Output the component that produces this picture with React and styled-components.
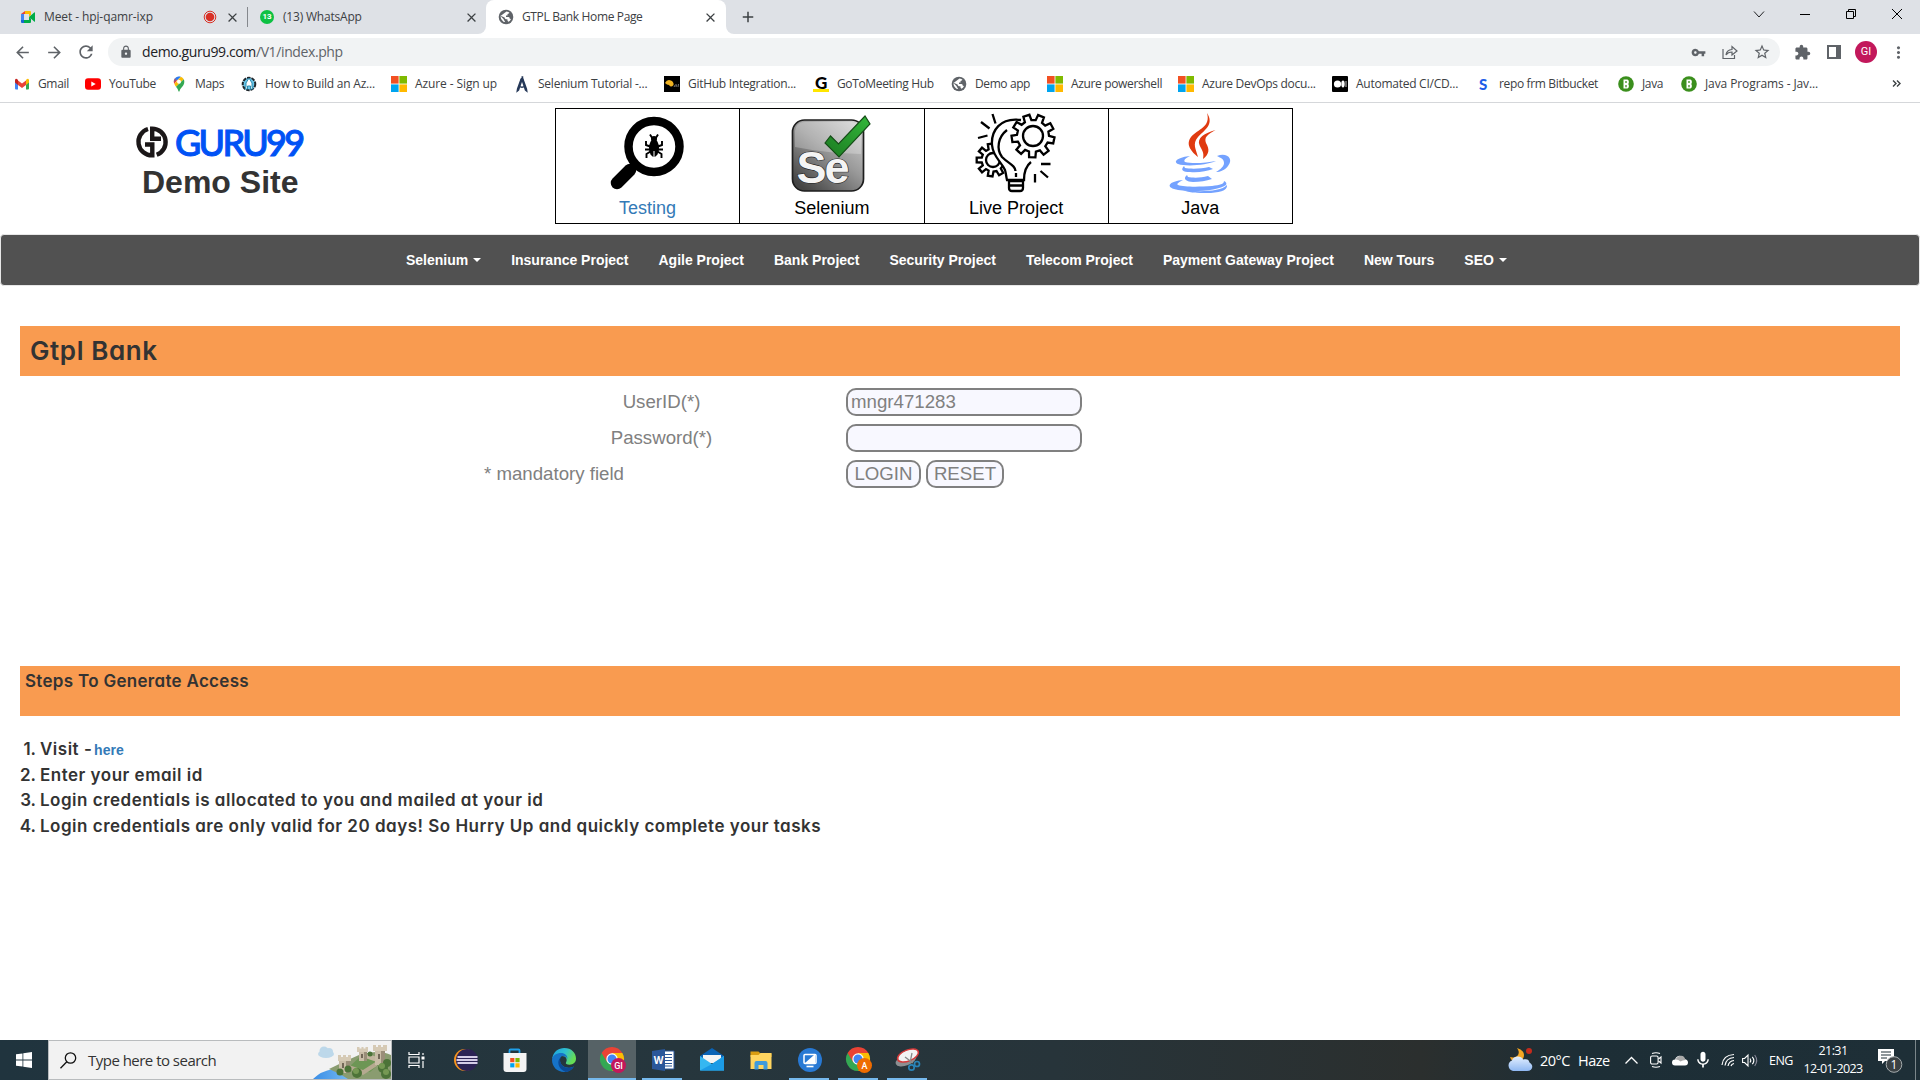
import React from "react";
import styled, { createGlobalStyle } from "styled-components";
import {
  MdArrowBack, MdArrowForward, MdRefresh, MdLock, MdVpnKey,
  MdStarOutline, MdExtension, MdMoreVert, MdClose, MdAdd, MdMic,
} from "react-icons/md";

const ui = `"Open Sans", "Noto Sans", sans-serif`;
const arial = `"Liberation Sans", Arial, sans-serif`;
const rounded = `Inter, Lato, sans-serif`;

const Global = createGlobalStyle`
  *, *::before { box-sizing: border-box; }
  body { margin: 0; background: #fff; overflow: hidden; font-family: ${arial}; }
  svg { display: block; flex: none; overflow: visible; }
`;

const Screen = styled.div`
  width: 1920px;
  height: 1080px;
  display: flex;
  flex-direction: column;
  overflow: hidden;
`;

/* ---------- browser ---------- */
const TabStrip = styled.header`
  height: 34px;
  display: flex;
  flex: none;
  font: 12px ${ui};
  color: #3c4043;
`;
const StripLeft = styled.div`
  width: 486px;
  display: flex;
  background: #dee1e6;
  border-bottom-right-radius: 8px;
`;
const StripRight = styled.div`
  flex: 1;
  display: flex;
  align-items: center;
  background: #dee1e6;
  border-bottom-left-radius: 8px;
  padding-left: 13px;
`;
const TabCorner = styled.div`
  background: #dee1e6;
  height: 17px;
  width: 240px;
`;
const Tab = styled.div`
  width: ${(p) => p.$w}px;
  height: 34px;
  display: flex;
  align-items: center;
  gap: 8px;
  padding: 0 ${(p) => p.$pr}px 0 ${(p) => p.$pl}px;
  background: ${(p) => (p.$active ? "#fff" : "transparent")};
  border-radius: 8px 8px 0 0;
`;
const TabTitle = styled.span`
  flex: 1;
  padding-bottom: 1px;
  letter-spacing: ${(p) => p.$ls}px;
  white-space: nowrap;
`;
const Divider = styled.i`
  width: 1px;
  height: 20px;
  margin-top: 7px;
  background: #85888d;
`;
const WindowButtons = styled.div`
  display: flex;
  margin-left: auto;
  padding-bottom: 6px;
  align-items: center;
`;
const Slot = styled.span`
  width: ${(p) => p.$w}px;
  display: flex;
  flex: none;
  align-items: center;
  justify-content: center;
  color: ${(p) => p.$c || "#5f6368"};
`;
const AddressRow = styled.div`
  height: 36px;
  flex: none;
  display: flex;
  align-items: center;
  padding-left: 6px;
`;
const Omnibox = styled.div`
  width: 1672px;
  height: 28px;
  margin-left: 6px;
  border-radius: 14px;
  background: #f1f3f4;
  display: flex;
  align-items: center;
  padding: 0 2px 0 11px;
`;
const Url = styled.span`
  flex: 1;
  margin-left: 9px;
  padding-bottom: 1px;
  font: 14px ${ui};
  letter-spacing: -0.39px;
  color: #5f6368;
  b { font-weight: 400; color: #202124; }
`;
const Avatar = styled.span`
  width: 22px;
  height: 22px;
  border-radius: 50%;
  background: #c2185b;
  color: #fff;
  font: 11px/22px Roboto, sans-serif;
  text-align: center;
`;
const Bookmarks = styled.nav`
  height: 33px;
  flex: none;
  display: flex;
  align-items: center;
  padding: 0 0 5px 14px;
  border-bottom: 1px solid #d5d7da;
  font: 12px ${ui};
  color: #3c4043;
`;
const Bookmark = styled.a`
  width: ${(p) => p.$w}px;
  display: flex;
  align-items: center;
  gap: 8px;
  letter-spacing: ${(p) => p.$ls || -0.35}px;
  white-space: nowrap;
`;

const s16 = { width: 16, height: 16, viewBox: "0 0 16 16" };
const Meet = () => (
  <svg {...s16}>
    <path d="M1 5l4-3v3H1z" fill="#ea4335" /><path d="M1 5h3v6H1z" fill="#4285f4" />
    <path d="M1 11h3v3H2a1 1 0 0 1-1-1z" fill="#1967d2" />
    <path d="M5 2h5q1 0 1 1v3L9 8V5H5z" fill="#fbbc04" />
    <path d="M4 11h5V8l2 2v3q0 1-1 1H4zM9 8l5.2-4.6q.8-.5.8.4v8.4q0 .9-.8.4z" fill="#00ac47" />
  </svg>
);
const Record = () => (
  <svg width="14" height="14" viewBox="0 0 14 14"><circle cx="7" cy="7" r="5.8" fill="none" stroke="#d93025" /><circle cx="7" cy="7" r="4.300" fill="#d93025" /></svg>
);
const WaBadge = styled.span`
  width: 14px;
  height: 14px;
  margin: 0 1px;
  border-radius: 50%;
  background: #0dc143;
  color: #fff;
  font: bold 8px/14px Roboto, sans-serif;
  text-align: center;
`;
const Gmail = () => (
  <svg {...s16}>
    <path d="M1 4h3v9.5H2q-1 0-1-1z" fill="#4285f4" /><path d="M12 4h3v8.500q0 1-1 1h-2z" fill="#34a853" />
    <path d="M4 4.500l4 3 4-3V9L8 12 4 9z" fill="#ea4335" /><path d="M1 4.500Q1 2 3 3l1 1v5L1 6.500z" fill="#c5221f" />
    <path d="M15 4.500Q15 2 13 3l-1 1v5l3-2.500z" fill="#fbbc04" />
  </svg>
);
const YouTube = () => (
  <svg {...s16}><rect y="2.300" width="16" height="11.400" rx="3" fill="#f00" /><path d="M6.300 5.500v5L10.700 8z" fill="#fff" /></svg>
);
const Maps = () => (
  <svg {...s16}>
    <path d="M8 0.500a5.300 5.300 0 0 0-4 1.800L6 4.500 9.800.800z" fill="#4285f4" />
    <path d="M4 2.300A5.300 5.300 0 0 0 3.400 8L6 4.500z" fill="#ea4335" />
    <path d="M9.800.800 3.400 8q.600 1.500 1.600 2.700L12.800 3.300Q11.700 1.300 9.800.800z" fill="#fbbc04" />
    <path d="M12.800 3.300 5 10.700q2 2.300 2.400 4.300.6 1.300 1.200 0c.7-3.500 4.800-5 4.700-9.300q0-1.300-.5-2.400z" fill="#34a853" />
    <path d="M8 0.500A5.300 5.300 0 0 0 2.800 6L9.800.800z" fill="#1a73e8" opacity=".55" />
    <circle cx="8" cy="5.700" r="2" fill="#fff" />
  </svg>
);
const Rocket = () => (
  <svg {...s16}>
    <circle cx="8" cy="8" r="6.300" fill="#6cc7ea" stroke="#20262b" strokeWidth="2" strokeDasharray="3.500 1" />
    <path d="M8 2l3 5v4l1 2H9.500V10h-3v3H4l1-2V7z" fill="#fff" stroke="#1d83a8" strokeWidth=".9" />
  </svg>
);
const Windows4 = () => (
  <svg {...s16}><path fill="#f25022" d="M0 0h7.600v7.600H0z" /><path fill="#7fba00" d="M8.400 0H16v7.600H8.400z" /><path fill="#00a4ef" d="M0 8.400h7.600V16H0z" /><path fill="#ffb900" d="M8.400 8.400H16V16H8.400z" /></svg>
);
const Compass = () => (
  <svg {...s16}><path d="M7.500 1h1v2M8 3.500 4.500 14l-1.200 1 .3-2L7 3.500M9 3.500 12.400 13l.3 2-1.200-1L8 3.500M5 10q3 2.500 6 0" fill="none" stroke="#253858" strokeWidth="1.500" /><circle cx="8" cy="3.500" r="1.700" fill="#253858" /></svg>
);
const Bird = () => (
  <svg {...s16}><path d="M0 0h16v16H0z" fill="#000" /><path d="M1 7q2-4 6-2.500Q10 6 9.500 9 7 12 5 9 3 9 1 7z" fill="#f0b323" /><path d="M10 11l1.500-2.500M12 11l.5-2.500M14 11l.5-3" stroke="#999" strokeWidth=".8" /></svg>
);
const GoTo = styled.span`
  width: 16px;
  height: 16px;
  border-bottom: 3px solid #ffe600;
  color: #000;
  font: 900 17px/13px Lato, sans-serif;
  text-align: center;
`;
const Medium = () => (
  <svg {...s16}><rect width="16" height="16" rx="1" fill="#000" /><circle cx="5.500" cy="8" r="3.600" fill="#fff" /><ellipse cx="11" cy="8" rx="1.700" ry="3.400" fill="#fff" /><path d="M14 5v6" stroke="#fff" strokeWidth=".8" /></svg>
);
const SLetter = styled.span`
  width: 16px;
  color: #1f5fe8;
  font: 900 15px/16px Lato, sans-serif;
  text-align: center;
`;
const Green = () => (
  <svg {...s16}><circle cx="8" cy="8" r="7.800" fill="#3b8f1d" /><path d="M5.500 3.500v9h4l1.300-1.300V8.700L10 8l.8-.8V4.700L9.500 3.500z" fill="#fff" /><path d="M8 5v2M8 9v2.300" stroke="#3b8f1d" strokeWidth="1.300" /></svg>
);
const Globe = () => (
  <svg {...s16}>
    <circle cx="8" cy="8" r="7.300" fill="#5f6368" />
    <path d="M8.500 2.600q2.200.2 3 1.200-.5 1.100-2 1.100v1.500H8v1.500h2.500q1.300.3 1.300 1.800l1.200.4q-.9 1.900-2.500 2.700-1.300-.8-1.100-2.600H7.800Q6.600 9.800 6.600 8.500L2.500 6.800q-.2 3.600 2.700 5.600.8.600 1.600.7v-1.200Q5.700 11.600 5.700 10.200L2.500 7z" fill="#fff" />
  </svg>
);

const bookmarks = [
  [71, <Gmail />, "Gmail"], [86, <YouTube />, "YouTube"], [70, <Maps />, "Maps"],
  [150, <Rocket />, "How to Build an Az...", -0.22], [123, <Windows4 />, "Azure - Sign up", -0.1],
  [150, <Compass />, "Selenium Tutorial -...", -0.24], [149, <Bird />, "GitHub Integration...", -0.28],
  [138, <GoTo>G</GoTo>, "GoToMeeting Hub"], [96, <Globe />, "Demo app", -0.4],
  [131, <Windows4 />, "Azure powershell"], [154, <Windows4 />, "Azure DevOps docu...", -0.29],
  [143, <Medium />, "Automated CI/CD...", -0.26], [143, <SLetter>S</SLetter>, "repo frm Bitbucket"],
  [63, <Green />, "Java"], [211, <Green />, "Java Programs - Jav...", -0.1],
];

/* ---------- page ---------- */
const Page = styled.main`
  flex: 1;
  min-height: 0;
`;
const Top = styled.section`
  display: flex;
  height: 131px;
`;
const Brand = styled.div`
  width: 555px;
  padding: 22px 0 0 136px;
`;
const LogoRow = styled.div`
  display: flex;
  align-items: center;
  height: 34px;
`;
const Wordmark = styled.span`
  margin-left: 7px;
  font: 500 36px/34px Lato, sans-serif;
  -webkit-text-stroke: 1px #0052f5;
  letter-spacing: -2.7px;
  color: #0052f5;
`;
const DemoSite = styled.h2`
  margin: 4px 0 0 6px;
  font: bold 32px/38px ${arial};
  color: #333;
`;
const Cards = styled.div`
  display: flex;
  width: 738px;
  height: 116px;
  margin-top: 5px;
  border: 1px solid #000;
`;
const Card = styled.a`
  flex: 1;
  display: flex;
  flex-direction: column;
  align-items: center;
  padding-top: 4px;
  font: 18px/25px ${arial};
  color: ${(p) => (p.$link ? "#337ab7" : "#000")};
  & + & { border-left: 1px solid #000; }
  svg { margin: 0 ${(p) => p.$shift || 0}px 3px 0; }
`;
const NavBar = styled.nav`
  height: 52px;
  padding-left: 390px;
  display: flex;
  align-items: center;
  background: #515151;
  border: 1px solid #e7e7e7;
  border-radius: 4px;
`;
const NavItem = styled.a`
  display: flex;
  align-items: center;
  padding: 0 15px;
  font: bold 14px/20px ${arial};
  letter-spacing: -0.01px;
  color: #fff;
  white-space: nowrap;
`;
const Caret = styled.i`
  margin-left: 5px;
  border: 4px solid transparent;
  border-top-color: #fff;
  border-bottom: 0;
`;
const Band = styled.div`
  height: 50px;
  margin: ${(p) => p.$mt}px 20px 0;
  padding: ${(p) => p.$pad};
  background: #f99b50;
  color: #333;
  font: 600 ${(p) => p.$size}px/${(p) => p.$lh}px ${rounded};
  letter-spacing: ${(p) => p.$ls}px;
  font-feature-settings: "cv11";
`;
const Form = styled.form`
  width: 610px;
  margin: 12px 0 0 484px;
  display: grid;
  grid-template-columns: 355px 1fr;
  grid-auto-rows: 28px;
  column-gap: 7px;
  row-gap: 8px;
  font: 18.67px/28px ${arial};
  color: #808080;
`;
const Label = styled.label`
  text-align: ${(p) => (p.$left ? "left" : "center")};
`;
const Field = styled.input`
  width: 236px;
  height: 28px;
  padding: 0 3px;
  border: 2px solid #808080;
  border-radius: 10px;
  background: #f8f8ff;
  color: #808080;
  font: 18.67px ${arial};
`;
const Buttons = styled.div`
  display: flex;
  gap: 5px;
`;
const Button = styled.button`
  width: ${(p) => p.$w}px;
  height: 28px;
  padding: 0;
  border: 2px solid #808080;
  border-radius: 10px;
  background: #f8f8ff;
  color: #808080;
  font: 18.67px ${arial};
`;
const Steps = styled.ol`
  margin: 21px 0 0;
  padding: 0 0 0 40px;
  font: 600 17px/25.6px ${rounded};
  font-feature-settings: "cv11";
  letter-spacing: 0.5px;
  color: #333;
  a { margin-left: -3px; font: bold 14px/20px ${arial}; letter-spacing: 0; color: #337ab7; }
`;
const Step = styled.li`
  display: flex;
  align-items: baseline;
  height: 25.6px;
  white-space: pre;
  &::before {
    content: "${(p) => p.$n}.";
    width: 24px;
    margin-left: -24px;
    padding-right: 4px;
    letter-spacing: 0;
    display: flex;
    justify-content: flex-end;
  }
`;

const GuruMark = () => (
  <svg width="32" height="32" viewBox="0 0 32 32">
    <g fill="none" stroke="#1b1718" strokeWidth="4.400">
      <path d="M12 3A13.500 13.500 0 0 0 16.300 29.400V18.500H9" />
      <path d="M20.700 28.800A13.500 13.500 0 0 0 16.200 2.600V12.800H25" />
    </g>
  </svg>
);
const Magnifier = () => (
  <svg width="80" height="80" viewBox="0 0 80 80">
    <circle cx="48" cy="33.500" r="25.500" fill="none" stroke="#000" strokeWidth="8.500" />
    <path d="M29 52l-4 4" stroke="#000" strokeWidth="7" />
    <path d="M24 57L11 70" stroke="#000" strokeWidth="12.500" strokeLinecap="round" />
    <ellipse cx="48" cy="35" rx="5" ry="9" /><circle cx="48" cy="26" r="3" />
    <path d="M44 21.500l2.500 4M52 21.500l-2.500 4M40 28v4l4 1.500M56 28v4l-4 1.500M39 36.500h6M57 36.500h-6M40.500 45v-4l4-2.500M55.500 45v-4l-4-2.500" stroke="#000" strokeWidth="1.900" fill="none" />
    <path d="M48 38v6" stroke="#fff" strokeWidth="1" />
  </svg>
);
const SeleniumLogo = () => (
  <svg width="80" height="80" viewBox="0 0 80 80">
    <defs>
      <linearGradient id="se" x1="1" y1="0" x2="0.200" y2="1"><stop offset="0" stopColor="#d8d8d8" /><stop offset=".5" stopColor="#999" /><stop offset="1" stopColor="#444" /></linearGradient>
      <linearGradient id="ck" x1="0" y1="1" x2="1" y2="0"><stop offset="0" stopColor="#1c7a22" /><stop offset="1" stopColor="#33b83a" /></linearGradient>
    </defs>
    <rect x="1.500" y="7" width="71" height="71" rx="12" fill="url(#se)" stroke="#1e1e1e" strokeWidth="1.700" />
    <path d="M4 34V18Q5 9 14 9h47q9 1 9 10v22Q34 40 4 34z" fill="#fff" opacity=".25" />
    <text x="5.500" y="70" fontFamily="Liberation Sans" fontWeight="bold" fontSize="45" letterSpacing="-2" fill="#f4f4f4" stroke="#222" strokeWidth="1.200" paintOrder="stroke">Se</text>
    <path d="M34 30l5.500-7 8 8L74 3l5 8-31 33z" fill="url(#ck)" stroke="#164d18" strokeWidth="1.200" />
  </svg>
);
const gear = (cx, cy, ro, ri, n, rot = 0) => {
  const pts = [];
  for (let i = 0; i < n; i++) {
    const a = ((i + rot) * 2 * Math.PI) / n;
    const w = Math.PI / n;
    [[ri, -0.62], [ro, -0.42], [ro, 0.42], [ri, 0.62]].forEach(([r, k]) =>
      pts.push(`${(cx + r * Math.cos(a + k * w)).toFixed(1)},${(cy + r * Math.sin(a + k * w)).toFixed(1)}`)
    );
  }
  return pts.join(" ");
};
const Idea = () => (
  <svg width="80" height="80" viewBox="0 0 80 80" fill="none" stroke="#000" strokeWidth="2.300">
    <polygon points={gear(17, 47, 16.500, 11.500, 9, 0.500)} />
    <circle cx="17" cy="47" r="7" />
    <path d="M45 7C24 4 15 18 16 32c1 12 9 16 13 25 1 3 1 6 2 10h17c0-9 2-14 7-18" fill="#fff" />
    <path d="M31 17c-9 7-11 19-5 27 7 7 13 8 13.500 14M40 60v4" />
    <polygon points={gear(57, 23, 21.500, 16, 9, 0.300)} fill="#fff" />
    <circle cx="57" cy="23" r="10" />
    <path d="M33 68h14v7q0 3-3 3h-8q-3 0-3-3zM33 72.500h14M16.500 1l3 9.500M5 9l8.500 6.500M2 25l9.500-2.500M65 51h9.500M64.500 58l7.500 6.500M59 61v8.500" />
  </svg>
);
const JavaLogo = () => (
  <svg width="80" height="80" viewBox="0 0 80 80">
    <path d="M46 0c4 14-9 16-16 24-6 8 1 15 7 20-2-8-6-13 0-20 8-8 16-13 9-24z" fill="#e03a10" />
    <path d="M54.500 17c-11 3-19 8-16 15 2 5 5 7 3.500 14 6-5 7-9 3-16-2-6 1-8 9.500-13z" fill="#e03a10" />
    <g fill="#74a2ff">
      <path d="M29 43c-10 1-18 5-12 8 9 3 29 1 38-3-10 2-24 3-31 1-2-2 1-4 5-6z" />
      <path d="M56 43c10-4 17 3 11 10-3 4-8 6-12 6 5-3 8-6 8-9 0-4-3-5-7-7z" />
      <path d="M23 53c-4 4-1 6 6 6 8 1 17-1 23-3l-4-2c-8 2-19 2-24 1z" />
      <path d="M26 62c-5 4 0 7 6 7 7 0 13-1 19-3l-4-3c-7 2-15 2-20 1z" />
      <path d="M22 67c-12 1-18 6-9 9 14 4 45 2 52-4 1-2 0-3-2-4 0 3-4 4-12 5-14 1-28 1-34-1-2-1 1-3 5-5z" />
      <path d="M22 77c14 2 38 2 44-5 1 6-9 8-20 8-9 0-18 0-24-3z" />
    </g>
  </svg>
);

/* ---------- taskbar ---------- */
const Taskbar = styled.footer`
  height: 40px;
  flex: none;
  display: flex;
  align-items: center;
  background: linear-gradient(90deg, #20343e 0, #26363d 35%, #27343a 55%, #2b2f2e 74%, #1d2e36 82%, #1e2f37 100%);
  color: #fff;
  font: 14.500px ${ui};
`;
const SearchBox = styled.div`
  width: 344px;
  height: 40px;
  display: flex;
  align-items: center;
  padding-left: 11px;
  background: #f2f2f2;
  border: 1px solid #b9bcbe;
  color: #333;
  font-size: 15px;
  letter-spacing: -0.52px;
  span { flex: 1; margin-left: 11px; }
`;
const Apps = styled.div`
  display: flex;
  margin-left: -1px;
`;
const TaskItem = styled.span`
  width: ${(p) => p.$w || 49.2}px;
  height: 40px;
  display: flex;
  align-items: center;
  justify-content: center;
`;
const TaskFace = styled.span`
  width: ${(p) => (p.$active ? 48 : 40)}px;
  height: 40px;
  display: flex;
  align-items: center;
  justify-content: center;
  background: ${(p) => (p.$active ? "#566266" : "transparent")};
  border-bottom: 2px solid ${(p) => (p.$open ? "#76b9ed" : "transparent")};
  padding: 2px 0 0 2px;
`;
const Tray = styled.div`
  display: flex;
  align-items: center;
  height: 40px;
  margin-left: auto;
`;
const TrayText = styled.span`
  width: ${(p) => p.$w}px;
  font-size: ${(p) => p.$s || 14.5}px;
  letter-spacing: ${(p) => p.$ls || -0.5}px;
  white-space: nowrap;
`;
const Clock = styled.div`
  width: 72px;
  font-size: 12.500px;
  line-height: 18px;
  letter-spacing: -0.600px;
  text-align: center;
`;
const ShowDesktop = styled.i`
  width: 5px;
  height: 40px;
  border-left: 1px solid #7b868a;
`;

const Castle = () => (
  <svg width="80" height="38" viewBox="0 0 80 38">
    <defs><linearGradient id="river" x1="0" x2="1"><stop offset="0" stopColor="#3a8ee6" /><stop offset="1" stopColor="#7fc0f5" /></linearGradient></defs>
    <g fill="#bdd8ea"><ellipse cx="15" cy="13" rx="8" ry="4" /><circle cx="13" cy="10" r="4.500" /><circle cx="18" cy="11" r="4" /></g>
    <path d="M2 38Q10 30 22 28l22 10z" fill="url(#river)" />
    <path d="M18 28q16-8 30-14 20-6 32 0v24H37q-9-6-19-10z" fill="#8a9c70" />
    <path d="M38 26l14-13 20 7-13 11z" fill="#6d9655" />
    <path d="M38 24l14 5 14-9v5l-14 9-14-6z" fill="#b5a990" /><path d="M54 12l12 4v5l-12-4z" fill="#c3b69f" />
    <path d="M28 17h11v15H28zM48 8h8v12h-8zM64 7h10v17H64z" fill="#c9bda7" />
    <path d="M35 17h4v15h-4zM53 8h3v12h-3zM70 7h4v17h-4z" fill="#9a8e79" />
    <path d="M27 14h3v2h2v-2h3v2h2v-2h3v6H27zM46 6h2.500v1.500h2V6h2v1.500h2V6H57v5H46zM62 4h3v2h2V4h3v2h2V4h4v6H62z" fill="#d6cab5" />
    <path d="M32 22v5M51 13v4M68 13v5" stroke="#554b3e" strokeWidth="1.500" />
    <g fill="#4c7338"><circle cx="29" cy="31" r="3.500" /><circle cx="37" cy="28" r="3.500" /><circle cx="46" cy="32" r="5" /><circle cx="72" cy="27" r="5" /><circle cx="76" cy="22" r="4" /><circle cx="59" cy="13" r="2.500" /><circle cx="75" cy="33" r="5" /></g>
    <g fill="#759853"><circle cx="45" cy="30" r="3" /><circle cx="71" cy="25" r="3" /><circle cx="75" cy="31" r="3" /></g>
  </svg>
);
const s24 = { width: 24, height: 24, viewBox: "0 0 24 24" };
const TaskView = () => (
  <svg width="18" height="18" viewBox="0 0 18 18" fill="none" stroke="#fff" strokeWidth="1.200"><path d="M1 1v2.500h10V1M1 17v-2.500h10V17M1 6h10v6H1zM15 2v2M15 10v7" /><path d="M13.500 5.500h3v3h-3z" fill="#fff" stroke="none" /></svg>
);
const Eclipse = () => (
  <svg {...s24}><circle cx="11" cy="12" r="11" fill="#f7941e" /><circle cx="13" cy="12" r="11" fill="#2c2255" /><path d="M3.500 9h20M2.500 12h21M3.500 15h20" stroke="#d5cce8" strokeWidth="1.900" /></svg>
);
const Store = () => (
  <svg {...s24}><path d="M6.500 6V2.500q0-1 1-1h8q1 0 1 1V6" fill="none" stroke="#1fa0ea" strokeWidth="1.800" /><path d="M.5 5h23v16q0 3-3 3h-17q-3 0-3-3z" fill="#f4f4f4" /><path fill="#f25022" d="M7.200 10h4.200v4.200H7.200z" /><path fill="#7fba00" d="M12.400 10h4.200v4.200h-4.200z" /><path fill="#00a4ef" d="M7.200 15.200h4.200v4.200H7.200z" /><path fill="#ffb900" d="M12.400 15.200h4.200v4.200h-4.200z" /></svg>
);
const Edge = () => (
  <svg {...s24}>
    <defs><linearGradient id="eg" x1="0" x2="1" y2=".4"><stop offset="0" stopColor="#1ba0e2" /><stop offset=".55" stopColor="#2fc0d0" /><stop offset="1" stopColor="#66dd55" /></linearGradient></defs>
    <path d="M.3 10C1.500 3.500 6.500 0 12.300 0 19.500 0 24 5 24 10.500c0 4-3 6.200-6.300 6.200-3.200 0-4.200-1.200-3.800-2 1.800-3 .5-6.700-4-6.700C5 8 0 11.500.3 10z" fill="url(#eg)" />
    <path d="M0 12C0 7.500 5 5 9 5c4 0 6.500 2.500 6.500 6-1-2.500-3-3.500-5-3C7 9 7 15 11 18c3.500 2.500 8 2 11 .2C20 22 16 24 12 24 5.500 24 0 19 0 12z" fill="#1673c8" />
    <path d="M8.500 9.500C4.500 13 6 21 13.500 23.900 17 23.700 20 22 22 18.200 17 21 12 20 9.500 16.500 8 14 7.800 11.500 8.500 9.500z" fill="#0c4a95" />
  </svg>
);
const Chrome = ({ badge, color }) => (
  <svg width="26" height="26" viewBox="0 0 26 26">
    <path d="M12 12V6h10.400A12 12 0 0 1 12 24l5.200-9z" fill="#fbbc04" />
    <path d="M12 12l5.200 3L12 24A12 12 0 0 1 1.600 6z" fill="#34a853" /><path d="M1.600 6A12 12 0 0 1 22.400 6H12l-5 9z" fill="#ea4335" />
    <circle cx="12" cy="12" r="5.700" fill="#fff" /><circle cx="12" cy="12" r="4.500" fill="#4285f4" />
    <circle cx="18.500" cy="18.500" r="7.500" fill={color} />
    <text x="18.500" y="21.700" textAnchor="middle" fontFamily="Roboto" fontSize="9" fontWeight="500" fill="#fff">{badge}</text>
  </svg>
);
const Word = () => (
  <svg {...s24}><path d="M12 3h11v18H12z" fill="#fff" stroke="#2b579a" /><path d="M14 6.500h7M14 9.500h7M14 12.500h7M14 15.500h7M14 18h7" stroke="#2b579a" /><path d="M1 3l13-2v22L1 21z" fill="#2b579a" /><text x="7.500" y="16" textAnchor="middle" fontFamily="Open Sans" fontWeight="bold" fontSize="10" fill="#fff">W</text></svg>
);
const Mail = () => (
  <svg {...s24}><path d="M0 8l12-8 12 8v4H0z" fill="#0a63b5" /><path d="M3 7h18v8H3z" fill="#f4f4f4" /><path d="M0 8l12 8 12-8v14.500H0z" fill="#35b7f1" /><path d="M0 22.500L12 16 24 8v14.500z" fill="#1c9be6" /></svg>
);
const Explorer = () => (
  <svg {...s24}><path d="M1.500 3.500h8l2 2h11V9h-21z" fill="#d99d12" /><path d="M1.500 7h8l2-2h11v16h-21z" fill="#ffd560" /><path d="M5.500 21.500V15q0-2 2-2h9q2 0 2 2v6.500h-4V17h-5v4.500z" fill="#3f9bdc" /></svg>
);
const Remote = () => (
  <svg {...s24}><circle cx="12" cy="12" r="12" fill="#2879d4" /><rect x="6" y="6.500" width="12" height="9" rx="1" fill="none" stroke="#fff" strokeWidth="1.500" /><path d="M7 15l9-8h1v8z" fill="#fff" /><path d="M8.500 18.500h7" stroke="#fff" strokeWidth="1.600" /></svg>
);
const Snip = () => (
  <svg {...s24}><ellipse cx="10" cy="12" rx="11" ry="5.500" fill="#8c8f92" transform="rotate(-22 10 12)" /><ellipse cx="12" cy="7.500" rx="11" ry="5.500" fill="#f3f3f3" stroke="#d53a3a" strokeWidth="1.500" transform="rotate(-22 12 7.500)" /><path d="M9 9l8 6M16 5l-2 10" stroke="#888" strokeWidth="1.300" /><g fill="none" stroke="#2a84b8" strokeWidth="1.700"><circle cx="15.500" cy="19.500" r="2.700" /><circle cx="21" cy="16" r="2.500" /></g></svg>
);
const Weather = () => (
  <svg width="26" height="24" viewBox="0 0 26 24"><defs><linearGradient id="cl" x2="0" y2="1"><stop offset="0" stopColor="#e3efff" /><stop offset="1" stopColor="#8fb8f2" /></linearGradient></defs><path d="M10 0c4 5 1 11-7 9 2 8 14 6 14-2 0-4-4-6-7-7z" fill="#f5a623" /><path d="M6 23a5.500 5.500 0 0 1-1-10.500C6 8 14 7 16 11.500c4-1 6 0 6.500 3C27 17 26 23 20 23z" fill="url(#cl)" /><circle cx="22" cy="3" r="3" fill="#c42b1c" /></svg>
);
const apps = [
  [<TaskView />], [<Eclipse />], [<Store />], [<Edge />],
  [<Chrome badge="GI" color="#c2185b" />, true, true], [<Word />, true], [<Mail />], [<Explorer />],
  [<Remote />, true], [<Chrome badge="A" color="#ef6c00" />, true], [<Snip />, true],
];

export default function App() {
  return (
    <Screen>
      <Global />
      <TabStrip>
        <StripLeft>
          <Tab $w={247} $pl={20} $pr={7}>
            <Meet /><TabTitle $ls={-0.1}>Meet - hpj-qamr-ixp</TabTitle><Record /><MdClose size={15} />
          </Tab>
          <Divider />
          <Tab $w={238} $pl={11} $pr={7}>
            <WaBadge>13</WaBadge><TabTitle $ls={-0.2}>(13) WhatsApp</TabTitle><MdClose size={15} />
          </Tab>
        </StripLeft>
        <TabCorner>
          <Tab $active $w={240} $pl={12} $pr={8}>
            <Globe /><TabTitle $ls={-0.36}>GTPL Bank Home Page</TabTitle><MdClose size={15} />
          </Tab>
        </TabCorner>
        <StripRight>
          <MdAdd size={18} />
          <WindowButtons>
            <Slot $w={46} $c="#202124"><svg width="10" height="7" viewBox="0 0 10 7"><path d="M0 .5L5 6l5-5.500" fill="none" stroke="currentColor" /></svg></Slot>
            <Slot $w={46} $c="#000"><svg width="10" height="1"><path d="M0 .5h10" stroke="currentColor" /></svg></Slot>
            <Slot $w={46} $c="#000"><svg width="10" height="10" viewBox="0 0 10 10"><path d="M.5 2.500h7v7h-7zM2.500 2.500v-2h7v7h-2" fill="none" stroke="currentColor" /></svg></Slot>
            <Slot $w={46} $c="#000"><svg width="10" height="10" viewBox="0 0 10 10"><path d="M0 0l10 10M10 0L0 10" stroke="currentColor" /></svg></Slot>
          </WindowButtons>
        </StripRight>
      </TabStrip>
      <AddressRow>
        <Slot $w={32}><MdArrowBack size={19} /></Slot>
        <Slot $w={32}><MdArrowForward size={19} /></Slot>
        <Slot $w={32}><MdRefresh size={20} /></Slot>
        <Omnibox>
          <MdLock size={14} color="#5f6368" />
          <Url><b>demo.guru99.com</b>/V1/index.php</Url>
          <Slot $w={32}><MdVpnKey size={15} /></Slot>
          <Slot $w={32}>
            <svg width="16" height="16" viewBox="0 0 16 16" fill="none" stroke="currentColor" strokeWidth="1.200"><path d="M1 5v9.500h11.500V11M4 11q.5-5 6-5.500V2.500L15 7l-5 4V8Q6 8 4 11z" /></svg>
          </Slot>
          <Slot $w={32}><MdStarOutline size={18} /></Slot>
        </Omnibox>
        <Slot $w={44}><MdExtension size={17} /></Slot>
        <Slot $w={20}><svg width="14" height="14" viewBox="0 0 14 14"><path d="M1 1h12v12H1z" fill="none" stroke="currentColor" strokeWidth="2" /><path d="M9 1h4v12H9z" fill="currentColor" /></svg></Slot>
        <Slot $w={44}><Avatar>GI</Avatar></Slot>
        <Slot $w={21}><MdMoreVert size={19} /></Slot>
      </AddressRow>
      <Bookmarks>
        {bookmarks.map(([w, icon, label, ls], i) => (
          <Bookmark key={i} $w={w} $ls={ls}>{icon}<span>{label}</span></Bookmark>
        ))}
        <svg width="9" height="7" viewBox="0 0 9 7"><path d="M1 .5l3 3-3 3M5 .5l3 3-3 3" fill="none" stroke="#3c4043" strokeWidth="1.400" /></svg>
      </Bookmarks>

      <Page>
        <Top>
          <Brand>
            <LogoRow><GuruMark /><Wordmark>GURU99</Wordmark></LogoRow>
            <DemoSite>Demo Site</DemoSite>
          </Brand>
          <Cards>
            <Card $link $shift={3}><Magnifier />Testing</Card>
            <Card $shift={1}><SeleniumLogo />Selenium</Card>
            <Card><Idea />Live Project</Card>
            <Card $shift={-1}><JavaLogo />Java</Card>
          </Cards>
        </Top>
        <NavBar>
          <NavItem>Selenium<Caret /></NavItem>
          {["Insurance", "Agile", "Bank", "Security", "Telecom", "Payment Gateway"].map((n) => (
            <NavItem key={n}>{n} Project</NavItem>
          ))}
          <NavItem>New Tours</NavItem>
          <NavItem>SEO<Caret /></NavItem>
        </NavBar>
        <Band $mt={40} $pad="0 10px" $size={26} $lh={50} $ls={0.6}>Gtpl Bank</Band>
        <Form>
          <Label>UserID(*)</Label>
          <Field defaultValue="mngr471283" />
          <Label>Password(*)</Label>
          <Field type="password" />
          <Label $left>* mandatory field</Label>
          <Buttons><Button type="button" $w={75}>LOGIN</Button><Button type="button" $w={78}>RESET</Button></Buttons>
        </Form>
        <Band $mt={178} $pad="3px 5px" $size={17} $lh={24} $ls={0.3}>Steps To Generate Access</Band>
        <Steps>
          <Step $n={1}>Visit - <a>here</a></Step>
          <Step $n={2}>Enter your email id</Step>
          <Step $n={3}>Login credentials is allocated to you and mailed at your id</Step>
          <Step $n={4}>Login credentials are only valid for 20 days! So Hurry Up and quickly complete your tasks</Step>
        </Steps>
      </Page>

      <Taskbar>
        <TaskItem $w={48}>
          <svg width="16" height="16" viewBox="0 0 16 16" fill="#fff"><path d="M0 2.300l6.500-.9v6.200H0zM7.300 1.300L16 0v7.600H7.300zM0 8.400h6.500v6.200L0 13.700zM7.300 8.400H16V16l-8.700-1.300z" /></svg>
        </TaskItem>
        <SearchBox>
          <svg width="17" height="17" viewBox="0 0 17 17" fill="none" stroke="#111" strokeWidth="1.300"><circle cx="10.500" cy="6" r="5.200" /><path d="M6.800 9.800L.5 16.300" /></svg>
          <span>Type here to search</span>
          <Castle />
        </SearchBox>
        <Apps>
          {apps.map(([icon, open, active], i) => (
            <TaskItem key={i}><TaskFace $open={open} $active={active}>{icon}</TaskFace></TaskItem>
          ))}
        </Apps>
        <Tray>
          <Slot $w={28}><Weather /></Slot>
          <Slot $w={6} />
          <TrayText $w={38}>20°C</TrayText>
          <TrayText $w={42}>Haze</TrayText>
          <Slot $w={23} $c="#fff"><svg width="13" height="7" viewBox="0 0 13 7"><path d="M.5 6.500l6-6 6 6" fill="none" stroke="currentColor" strokeWidth="1.300" /></svg></Slot>
          <Slot $w={25} $c="#fff"><svg width="12" height="16" viewBox="0 0 12 16" fill="none" stroke="currentColor" strokeWidth="1.100"><rect x=".6" y="4" width="7.500" height="8" rx="1.500" /><path d="M8.500 7l2.500-2v6L8.500 9M2 1.500q4-1.500 8 0M2 14.500q4 1.500 8 0" /></svg></Slot>
          <Slot $w={23}><svg width="16" height="11" viewBox="0 0 16 11"><path d="M3 10.500a3 3 0 0 1 0-6Q5 0 9 1q3 1 3.500 3 3.500.5 3.500 3.500t-3 3z" fill="#fff" /><path d="M6 1.500Q12-1 13.500 5q-3 0-5 1.500Q6 4 3 4.500z" fill="#aaa" /></svg></Slot>
          <Slot $w={23} $c="#fff"><MdMic size={20} /></Slot>
          <Slot $w={27} $c="#fff"><svg width="14" height="14" viewBox="0 0 14 14" fill="none" stroke="currentColor" strokeWidth="1.200"><path d="M1 12Q2 2 13 1.500M4 12.500Q5 5 13 4.500M7 13q1-5 6-5.500M10 13q.5-2 3-2.500" /></svg></Slot>
          <Slot $w={18} $c="#fff"><svg width="16" height="13" viewBox="0 0 16 13" fill="none" stroke="currentColor" strokeWidth="1.100"><path d="M.6 4.500h2L6 1v11L2.600 8.500h-2zM8 4.500q1.500 2 0 4M10.300 2.800q3 3.700 0 7.400" /><path d="M12.700 1q4 5.500 0 11" stroke="#889" /></svg></Slot>
          <Slot $w={10} />
          <TrayText $w={28} $s={12.5}>ENG</TrayText>
          <Clock>21:31<br />12-01-2023</Clock>
          <Slot $w={44}>
            <svg width="26" height="26" viewBox="0 0 26 26"><path d="M0 2h16v12H7l-3 3v-3H0z" fill="#fff" /><path d="M3 5h10M3 8h10M3 11h6" stroke="#1e2f37" strokeWidth="1.200" /><circle cx="16" cy="17.500" r="7.800" fill="#3a4144" stroke="#a5abad" /><text x="16" y="21.800" textAnchor="middle" fontFamily="Open Sans" fontSize="12" fill="#fff">1</text></svg>
          </Slot>
          <Slot $w={2} />
          <ShowDesktop />
        </Tray>
      </Taskbar>
    </Screen>
  );
}
